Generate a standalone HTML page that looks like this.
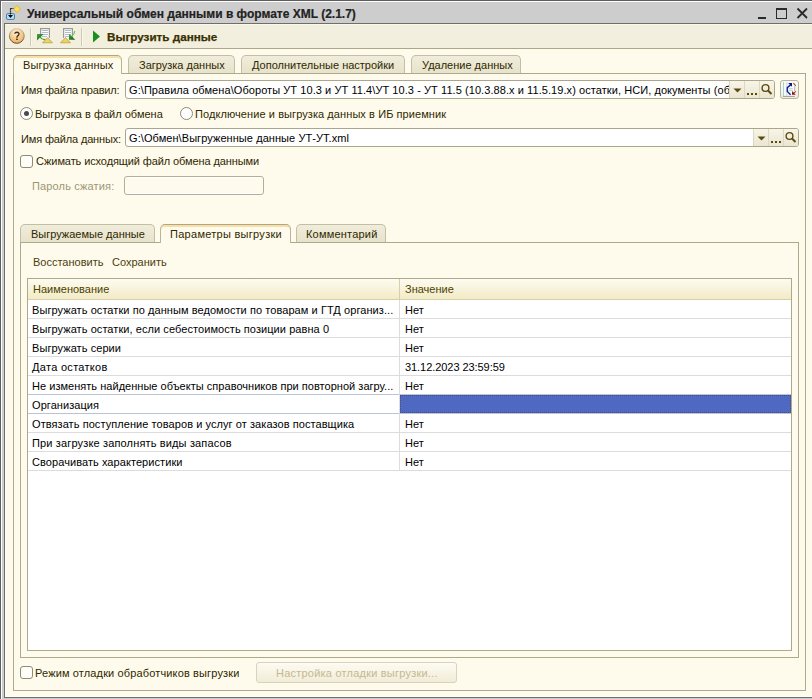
<!DOCTYPE html>
<html><head><meta charset="utf-8">
<style>
*{box-sizing:border-box;margin:0;padding:0}
html,body{width:812px;height:699px;overflow:hidden;background:#cdcdcd;font-family:"Liberation Sans",sans-serif;font-size:11px}
.a{position:absolute}
.t{position:absolute;white-space:nowrap;line-height:13px;font-size:11px;color:#2e2800}
.k{color:#000;letter-spacing:0.07px}
.tab{position:absolute;top:55px;height:18px;border:1px solid #c3bea4;border-bottom:none;border-radius:5px 5px 0 0;background:linear-gradient(#f0eddc,#e7e2ca)}
.tab.act{height:19px;background:#fffbec;border-color:#b9b49c;border-top-color:#b2a67e;box-shadow:inset 0 2px 0 #f6dfaa}
.fld{position:absolute;height:19px;border:1px solid #aaa58b;border-radius:3px;background:#fff;overflow:hidden}
.btn3{position:absolute;top:0;height:17px;width:15px;border-left:1px solid #ddd8c2;background:linear-gradient(#f8f5e8,#ebe6d0)}
.hl{position:absolute;height:1px;background:#dcdcdc}
.vl{position:absolute;width:1px;background:#dcdcdc}
</style></head><body>
<!-- window frame -->
<div class="a" style="left:0;top:0;width:812px;height:1px;background:#5e5e5e"></div>
<div class="a" style="left:0;top:0;width:1px;height:699px;background:#5e5e5e"></div>
<div class="a" style="left:1px;top:1px;width:811px;height:1px;background:#fff"></div>
<div class="a" style="left:1px;top:1px;width:1px;height:698px;background:#fff"></div>
<div class="a" style="left:4px;top:23px;width:808px;height:675px;background:#6e6e6a"></div>
<div class="a" style="left:5px;top:24px;width:807px;height:673px;background:#fffbec;box-shadow:inset 1px -1px 0 #fff"></div>

<!-- title -->
<svg class="a" style="left:5px;top:4px" width="18" height="18" viewBox="0 0 18 18">
  <rect x="1.5" y="9.5" width="8" height="6" rx="1.5" fill="#b4def8" stroke="#4f82a8"/>
  <path d="M5.5 4.5 V13" stroke="#000" stroke-width="1.2" stroke-dasharray="1.2 .8"/>
  <path d="M5.5 4.5 H9" stroke="#000" stroke-width="1.2" stroke-dasharray="1.2 .8"/>
  <path d="M3 11 L8 11 L5.5 14 Z" fill="#000"/>
  <path d="M12 1.5 L15.5 5 L12 8.5 L8.5 5 Z" fill="#f8e050" stroke="#e0b030" stroke-width=".8"/>
</svg>
<div class="t" style="left:27px;top:6px;font-size:12px;font-weight:bold;color:#222;line-height:16px;-webkit-text-stroke:0.2px #222">Универсальный обмен данными в формате XML (2.1.7)</div>
<div class="a" style="left:758px;top:17px;width:8px;height:2px;background:#2a2a2a"></div>
<div class="a" style="left:776px;top:8px;width:11px;height:11px;border:1px solid #2a2a2a;border-top-width:2px"></div>
<svg class="a" style="left:796px;top:7px" width="13" height="13" viewBox="0 0 13 13"><path d="M1.5 1.5 L11 11 M11 1.5 L1.5 11" stroke="#2a2a2a" stroke-width="1.8"/></svg>

<!-- toolbar -->
<div class="a" style="left:5px;top:24px;width:807px;height:24px;background:#f3efdf;box-shadow:inset 0 1px 0 #faf8ef"></div>
<div class="a" style="left:5px;top:48px;width:807px;height:1px;background:#aba88c"></div>
<svg class="a" style="left:0;top:0" width="100" height="50" viewBox="0 0 100 50">
  <defs>
    <radialGradient id="hg" cx="45%" cy="30%" r="70%"><stop offset="0" stop-color="#fff3e0"/><stop offset=".55" stop-color="#f6cc8e"/><stop offset="1" stop-color="#eab06a"/></radialGradient>
    <linearGradient id="hb" x1="0" y1="0" x2="0" y2="1"><stop offset="0" stop-color="#d0c8b4"/><stop offset="1" stop-color="#5a4a2c"/></linearGradient>
    <linearGradient id="ga" x1="0" y1="0" x2="1" y2="1"><stop offset="0" stop-color="#4aa83c"/><stop offset="1" stop-color="#0e5a14"/></linearGradient>
  </defs>
  <circle cx="16.8" cy="35.9" r="7.4" fill="url(#hg)" stroke="url(#hb)" stroke-width="1"/>
  <path d="M14.8 33.8 Q14.9 32.3 17 32.3 Q19.1 32.4 19 34 Q18.9 35.3 17.5 36 Q16.9 36.4 16.9 37.8" fill="none" stroke="#4a3216" stroke-width="1.4"/>
  <rect x="16.1" y="38.6" width="1.7" height="1.4" fill="#4a3216"/>
  <rect x="30" y="28" width="1" height="18" fill="#cdc9b6"/>
  <rect x="31" y="28" width="1" height="18" fill="#f9f7ee"/>
  <!-- icon 1 -->
  <path d="M40.6 38 V28.6 H49.4 V38" fill="#fdfdfd" stroke="#9a9a9a" stroke-width="1.2"/>
  <path d="M42 30.5h6M42 32.5h6M42 34.5h6M42 36.5h5" stroke="#a8b6c8" stroke-width=".9"/>
  <path d="M40 37 Q42 40 45.5 39.5" fill="none" stroke="#4aa040" stroke-width="1.3"/>
  <path d="M37 34 H43.6 L37 40.6 Z" fill="url(#ga)"/>
  <path d="M42.5 42.8 L47.5 37.6 L52.5 42.8 Z" fill="#ead466" stroke="#b89a38" stroke-width=".7"/>
  <!-- icon 2 -->
  <path d="M63.6 38 V28.6 H72.4 V38" fill="#fdfdfd" stroke="#9a9a9a" stroke-width="1.2"/>
  <path d="M65 30.5h6M65 32.5h6M65 34.5h6M65 36.5h5" stroke="#a8b6c8" stroke-width=".9"/>
  <path d="M74.8 31 Q74.5 34 71.5 36.5" fill="none" stroke="#70c058" stroke-width="1.2"/>
  <path d="M69 33.8 V39.8 H75.2 Z" fill="url(#ga)"/>
  <path d="M60.5 42.8 L65.5 37.6 L70.5 42.8 Z" fill="#ead466" stroke="#b89a38" stroke-width=".7"/>
  <rect x="81" y="28" width="1" height="18" fill="#cdc9b6"/>
  <rect x="82" y="28" width="1" height="18" fill="#f9f7ee"/>
</svg>
<svg class="a" style="left:92px;top:30px" width="9" height="13" viewBox="0 0 9 13"><path d="M1 0.5 L8 6.5 L1 12.5 Z" fill="#17901f"/></svg>
<div class="t" style="left:107px;top:30px;font-size:11.7px;font-weight:bold;color:#3a3000;line-height:14px;-webkit-text-stroke:0.25px #3a3000">Выгрузить данные</div>

<!-- main tab panel -->
<div class="a" style="left:13px;top:73px;width:793px;height:618px;border:1px solid #aca98c;background:#fffbec"></div>
<div class="tab act" style="left:13px;width:109px"></div>
<div class="tab" style="left:128px;width:107px"></div>
<div class="tab" style="left:241px;width:164px"></div>
<div class="tab" style="left:411px;width:110px"></div>
<div class="t" style="left:23px;top:59px;letter-spacing:0.15px">Выгрузка данных</div>
<div class="t" style="left:139px;top:59px">Загрузка данных</div>
<div class="t" style="left:252px;top:59px">Дополнительные настройки</div>
<div class="t" style="left:422px;top:59px">Удаление данных</div>

<!-- rules file -->
<div class="t" style="left:21px;top:84px;letter-spacing:-0.15px">Имя файла правил:</div>
<div class="fld" style="left:125px;top:80px;width:650px">
  <div class="t k" style="left:3px;top:3px;width:600px;overflow:hidden">G:\Правила обмена\Обороты УТ 10.3 и УТ 11.4\УТ 10.3 - УТ 11.5 (10.3.88.x и 11.5.19.x) остатки, НСИ, документы (обмен)</div>
  <div class="btn3" style="left:603px"><svg class="a" style="left:0;top:0" width="15" height="17"><path d="M3.5 7.5 H11.5 L7.5 11.5 Z" fill="#5b4a0e"/></svg></div>
  <div class="btn3" style="left:618px"><svg class="a" style="left:0;top:0" width="15" height="17"><rect x="2" y="12" width="2" height="2" fill="#5b4a0e"/><rect x="6" y="12" width="2" height="2" fill="#5b4a0e"/><rect x="10" y="12" width="2" height="2" fill="#5b4a0e"/></svg></div>
  <div class="btn3" style="left:633px;width:16px"><svg class="a" style="left:0;top:0" width="16" height="17"><circle cx="5.5" cy="7" r="3.4" fill="none" stroke="#5b4a0e" stroke-width="1.4"/><path d="M8 9.5 L11.5 13" stroke="#5b4a0e" stroke-width="2"/></svg></div>
</div>

<div class="a" style="left:780px;top:80px;width:19px;height:19px;border:1px solid #b9b39b;border-radius:3px;background:linear-gradient(#fdfcf6,#f0ecda)"></div>
<svg class="a" style="left:780px;top:80px" width="19" height="19" viewBox="0 0 19 19">
  <rect x="2.5" y="1.8" width="12.5" height="14" fill="#f2fbff"/>
  <path d="M3.5 2.6v.8M3.5 4.5v.8M3.5 6.6v.8M3.5 8.5v.8M3.5 10.5v.8M3.5 12.6v.8M3.5 14.6v.8" stroke="#3c8a88" stroke-width="1"/>
  <path d="M6 2.9h1.6M6 4.8h1.6M6 6.9h1M6 8.8h1M6 10.8h1M6 12.9h1M6 14.9h1.6" stroke="#b8c4cc" stroke-width=".8"/>
  <path d="M8.7 8.6h4M8.7 10.4h4" stroke="#b8c4c0" stroke-width=".8"/>
  <path d="M3 16.4 H14.8" stroke="#9c9c98" stroke-width="1"/>
  <path d="M10.9 4.6 L7.3 7.6 V11.4 L10.6 14.7" fill="none" stroke="#1a1f90" stroke-width="1.4"/>
  <path d="M8.2 3 H12 V6.8 Z" fill="#10157a"/>
  <path d="M13.4 3.2 L15.8 5.8" stroke="#c83838" stroke-width="1.1"/>
  <path d="M14.7 6.2 V11" stroke="#98b0a0" stroke-width=".8"/>
  <path d="M15.8 11.3 L13.8 13.2" stroke="#b03030" stroke-width="1.1"/>
  <path d="M12 11 V14.8 H15.8 Z" fill="#8e1010"/>
</svg>
<!-- radios -->
<div class="a" style="left:20px;top:107px;width:13px;height:13px;border-radius:50%;border:1px solid #8f8a74;background:#fff"></div>
<div class="a" style="left:24px;top:111px;width:5px;height:5px;border-radius:50%;background:#4a4a4a"></div>
<div class="t" style="left:35px;top:108px">Выгрузка в файл обмена</div>
<div class="a" style="left:180px;top:107px;width:13px;height:13px;border-radius:50%;border:1px solid #8f8a74;background:#fff"></div>
<div class="t" style="left:195px;top:108px;letter-spacing:0.08px">Подключение и выгрузка данных в ИБ приемник</div>

<!-- data file -->
<div class="t" style="left:21px;top:133px;letter-spacing:-0.15px">Имя файла данных:</div>
<div class="fld" style="left:125px;top:128px;width:674px">
  <div class="t k" style="left:3px;top:3px">G:\Обмен\Выгруженные данные УТ-УТ.xml</div>
  <div class="btn3" style="left:627px"><svg class="a" style="left:0;top:0" width="15" height="17"><path d="M3.5 7.5 H11.5 L7.5 11.5 Z" fill="#5b4a0e"/></svg></div>
  <div class="btn3" style="left:642px"><svg class="a" style="left:0;top:0" width="15" height="17"><rect x="2" y="12" width="2" height="2" fill="#5b4a0e"/><rect x="6" y="12" width="2" height="2" fill="#5b4a0e"/><rect x="10" y="12" width="2" height="2" fill="#5b4a0e"/></svg></div>
  <div class="btn3" style="left:657px;width:16px"><svg class="a" style="left:0;top:0" width="16" height="17"><circle cx="5.5" cy="7" r="3.4" fill="none" stroke="#5b4a0e" stroke-width="1.4"/><path d="M8 9.5 L11.5 13" stroke="#5b4a0e" stroke-width="2"/></svg></div>
</div>

<!-- compress -->
<div class="a" style="left:20px;top:155px;width:13px;height:13px;border-radius:3px;border:1px solid #8f8a74;background:#fffef8"></div>
<div class="t" style="left:36px;top:155px;letter-spacing:-0.1px">Сжимать исходящий файл обмена данными</div>
<div class="t" style="left:32px;top:180px;color:#9d9679;letter-spacing:0.15px">Пароль сжатия:</div>
<div class="a" style="left:124px;top:176px;width:140px;height:19px;border:1px solid #b3ae98;border-radius:3px;background:#fffbec;box-shadow:inset 0 1px 0 #fff,inset 0 -1px 0 #fff"></div>

<!-- inner tabs -->
<div class="a" style="left:20px;top:242px;width:779px;height:416px;border:1px solid #aca98c;background:#fffbec"></div>
<div class="tab" style="left:20px;top:224px;width:135px"></div>
<div class="tab act" style="left:160px;top:224px;width:131px"></div>
<div class="tab" style="left:296px;top:224px;width:90px"></div>
<div class="t" style="left:31px;top:228px">Выгружаемые данные</div>
<div class="t" style="left:170px;top:228px;letter-spacing:0.28px">Параметры выгрузки</div>
<div class="t" style="left:306px;top:228px;letter-spacing:0.2px">Комментарий</div>

<div class="t" style="left:33px;top:256px;color:#4a3e10">Восстановить</div>
<div class="t" style="left:112px;top:256px;color:#4a3e10">Сохранить</div>

<!-- table -->
<div class="a" style="left:27px;top:278px;width:765px;height:373px;border:1px solid #aca98c;background:#fff"></div>
<div class="a" style="left:28px;top:279px;width:763px;height:21px;background:linear-gradient(#fdfbf1,#f2ebc6);border-bottom:1px solid #d6cfaa"></div>
<div class="a" style="left:399px;top:279px;width:1px;height:20px;background:#d6cfaa"></div>
<div class="t" style="left:33px;top:283px;color:#4d4200">Наименование</div>
<div class="t" style="left:405px;top:283px;color:#4d4200">Значение</div>

<div class="hl" style="left:28px;top:318px;width:763px"></div>
<div class="hl" style="left:28px;top:337px;width:763px"></div>
<div class="hl" style="left:28px;top:356px;width:763px"></div>
<div class="hl" style="left:28px;top:375px;width:763px"></div>
<div class="hl" style="left:28px;top:394px;width:763px;background:#b9c4d6"></div>
<div class="hl" style="left:28px;top:413px;width:763px;background:#b9c4d6"></div>
<div class="hl" style="left:28px;top:432px;width:763px"></div>
<div class="hl" style="left:28px;top:451px;width:763px"></div>
<div class="hl" style="left:28px;top:470px;width:763px"></div>
<div class="vl" style="left:399px;top:300px;height:171px"></div>
<div class="a" style="left:400px;top:395px;width:391px;height:18px;background:#4f69c3;outline:1px dotted #4a5070;outline-offset:-1px"></div>

<div class="t k" style="left:32px;top:304px">Выгружать остатки по данным ведомости по товарам и ГТД организ...</div>
<div class="t k" style="left:32px;top:323px">Выгружать остатки, если себестоимость позиции равна 0</div>
<div class="t k" style="left:32px;top:342px">Выгружать серии</div>
<div class="t k" style="left:32px;top:361px;letter-spacing:0.3px">Дата остатков</div>
<div class="t k" style="left:32px;top:380px;letter-spacing:0.03px">Не изменять найденные объекты справочников при повторной загру...</div>
<div class="t k" style="left:32px;top:399px">Организация</div>
<div class="t k" style="left:32px;top:418px">Отвязать поступление товаров и услуг от заказов поставщика</div>
<div class="t k" style="left:32px;top:437px;letter-spacing:0.15px">При загрузке заполнять виды запасов</div>
<div class="t k" style="left:32px;top:456px">Сворачивать характеристики</div>

<div class="t k" style="left:405px;top:304px">Нет</div>
<div class="t k" style="left:405px;top:323px">Нет</div>
<div class="t k" style="left:405px;top:342px">Нет</div>
<div class="t k" style="left:405px;top:361px;letter-spacing:-0.06px">31.12.2023 23:59:59</div>
<div class="t k" style="left:405px;top:380px">Нет</div>
<div class="t k" style="left:405px;top:418px">Нет</div>
<div class="t k" style="left:405px;top:437px">Нет</div>
<div class="t k" style="left:405px;top:456px">Нет</div>

<!-- bottom -->
<div class="a" style="left:20px;top:666px;width:13px;height:13px;border-radius:3px;border:1px solid #8f8a74;background:#fffef8"></div>
<div class="t" style="left:35px;top:667px;letter-spacing:0.14px">Режим отладки обработчиков выгрузки</div>
<div class="a" style="left:256px;top:662px;width:201px;height:21px;border:1px solid #d9d3bc;border-radius:3px;background:linear-gradient(#fdfbf3,#f1ecd8)"></div>
<div class="t" style="left:276px;top:667px;color:#c6b88e;letter-spacing:0.22px">Настройка отладки выгрузки...</div>
</body></html>
